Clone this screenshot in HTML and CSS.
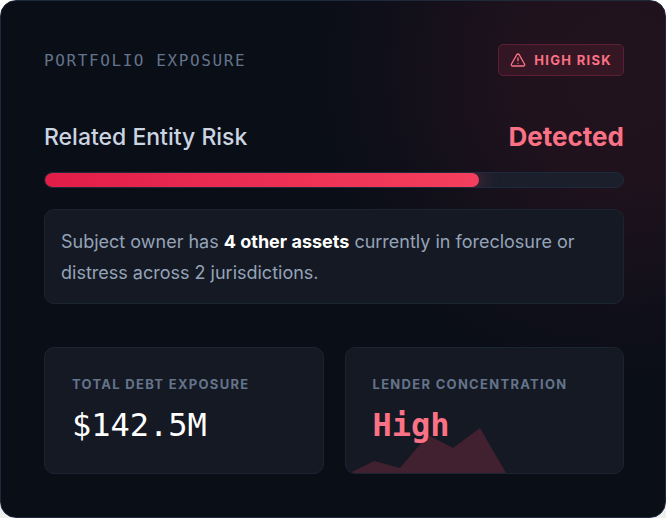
FILE: index.html
```html
<!DOCTYPE html>
<html lang="en">
<head>
    <meta charset="UTF-8">
    <meta name="viewport" content="width=device-width, initial-scale=1.0">
    <title>Portfolio Exposure</title>
    <link rel="stylesheet" href="styles.css">
</head>
<body>
    <main class="card">
        <header class="card-header">
            <h1 class="eyebrow">PORTFOLIO EXPOSURE</h1>
            <span class="badge">
                <svg class="badge-icon" viewBox="0 0 24 24" aria-hidden="true">
                    <path d="m21.73 18-8-14a2 2 0 0 0-3.48 0l-8 14A2 2 0 0 0 4 21h16a2 2 0 0 0 1.73-3Z"/>
                    <path d="M12 9v4"/>
                    <path d="M12 17h.01"/>
                </svg>
                HIGH RISK
            </span>
        </header>

        <!-- Risk level -->
        <section class="risk">
            <div class="risk-row">
                <h2 class="risk-label">Related Entity Risk</h2>
                <span class="risk-status">Detected</span>
            </div>
            <div class="bar">
                <div class="bar-fill" style="width: 75%"></div>
            </div>
            <p class="note">Subject owner has <strong>4 other assets</strong> currently in foreclosure or distress across 2 jurisdictions.</p>
        </section>

        <!-- Stats -->
        <section class="stats">
            <div class="stat">
                <h3 class="stat-label">TOTAL DEBT EXPOSURE</h3>
                <p class="stat-value">$142.5M</p>
            </div>
            <div class="stat">
                <svg class="stat-chart" viewBox="0 0 160 48" aria-hidden="true">
                    <path d="M4 48 L28 36 L54 43 L82 10 L107 23 L134 3 L160 48Z"/>
                </svg>
                <h3 class="stat-label">LENDER CONCENTRATION</h3>
                <p class="stat-value stat-value-high">High</p>
            </div>
        </section>
    </main>
</body>
</html>
```
FILE: styles.css
```css
* {
    margin: 0;
    padding: 0;
    box-sizing: border-box;
}

body {
    background: linear-gradient(#fff, #eee);
    font-family: Inter, "Liberation Sans", sans-serif;
}

.card {
    min-height: 100vh;
    padding: 43px 41px 43px 43px;
    border: 1px solid #1e293b;
    border-radius: 16px;
    background: radial-gradient(circle at calc(100% - 40px) 70px, #20131e 0, #1f121d 110px, #17111b 180px, #0f0f19 250px, #0a0e17 320px);
}

/* Header */
.card-header {
    display: flex;
    align-items: center;
    justify-content: space-between;
}

.eyebrow {
    font-family: "DejaVu Sans Mono", monospace;
    font-size: 16px;
    font-weight: 400;
    letter-spacing: 0.1em;
    color: #64748b;
}

.badge {
    display: flex;
    align-items: center;
    gap: 8px;
    height: 32px;
    padding: 0 11px;
    border: 1px solid #5d1f34;
    border-radius: 5px;
    background: rgba(244, 63, 94, 0.1);
    color: #fb7185;
    font-size: 13px;
    font-weight: 700;
    letter-spacing: 0.1em;
}

.badge-icon {
    width: 16px;
    height: 16px;
    fill: none;
    stroke: currentColor;
    stroke-width: 2;
    stroke-linecap: round;
    stroke-linejoin: round;
}

/* Risk level */
.risk {
    margin-top: 43px;
}

.risk-row {
    display: flex;
    align-items: center;
    justify-content: space-between;
    line-height: 36px;
}

.risk-label {
    font-size: 23px;
    font-weight: 500;
    color: #cbd5e1;
}

.risk-status {
    font-size: 26px;
    font-weight: 700;
    color: #fb7185;
}

.bar {
    height: 16px;
    margin-top: 17px;
    border: 1px solid #1e293b;
    border-radius: 8px;
    background: #1b1f2c;
    overflow: hidden;
}

.bar-fill {
    height: 100%;
    border-radius: 8px;
    background: linear-gradient(to right, #e11d48, #f43f5e);
    box-shadow: 0 0 20px rgba(244, 63, 94, 0.5);
}

.note {
    margin-top: 21px;
    padding: 16px 16px 15px;
    border: 1px solid #1b2431;
    border-radius: 10px;
    background: #151923;
    color: #94a3b8;
    font-size: 18px;
    line-height: 31px;
}

.note strong {
    color: #fff;
    font-weight: 700;
}

/* Stats */
.stats {
    display: grid;
    grid-template-columns: 1fr 1fr;
    gap: 21px;
    margin-top: 43px;
}

.stat {
    position: relative;
    overflow: hidden;
    padding: 27px 27px 26px;
    border: 1px solid #1b2431;
    border-radius: 10px;
    background: #151923;
}

.stat-label {
    font-size: 13px;
    font-weight: 700;
    line-height: 18px;
    letter-spacing: 0.1em;
    color: #64748b;
}

.stat-value {
    position: relative;
    margin-top: 11px;
    font-family: "DejaVu Sans Mono", monospace;
    font-size: 32px;
    line-height: 43px;
    color: #fff;
}

.stat-value-high {
    font-weight: 700;
    color: #fb7185;
}

.stat-chart {
    position: absolute;
    left: 0;
    bottom: 0;
    width: 160px;
    height: 48px;
    fill: rgba(244, 63, 94, 0.2);
}
```
